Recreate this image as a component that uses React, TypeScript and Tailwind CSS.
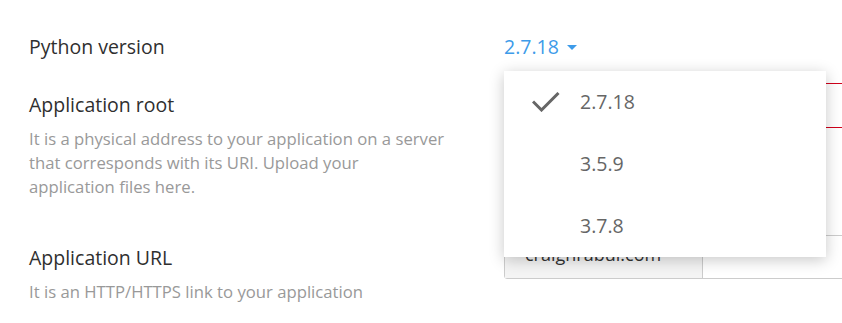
import { useState } from "react"

const versions = ["2.7.18", "3.5.9", "3.7.8"]

function CheckIcon() {
  return (
    <svg width="28" height="20" viewBox="0 0 28 20" fill="none">
      <path d="M1 9.5 L9.5 18 L26.5 1" stroke="#666" strokeWidth="3" strokeLinecap="butt" strokeLinejoin="miter" />
    </svg>
  )
}

export default function App() {
  const [selected, setSelected] = useState("2.7.18")
  const [open, setOpen] = useState(true)

  return (
    <div
      className="w-[842px] h-[323px] overflow-hidden bg-white text-[#333]"
      style={{ fontFamily: '"Open Sans", "Noto Sans", sans-serif' }}
    >
      <div className="grid grid-cols-[504px_1fr] pt-[34px]">
        {/* Python version */}
        <div className="pl-[29px] text-[19.5px] leading-[26px] text-[#2f2f2f]">Python version</div>
        <div className="relative">
          <button
            onClick={() => setOpen(!open)}
            className="flex items-center gap-[8px] text-[19.5px] leading-[26px] text-[#3d9be9]"
          >
            {selected}
            <span className="w-0 h-0 border-l-[5px] border-r-[5px] border-t-[5px] border-l-transparent border-r-transparent border-t-[#3d9be9] mt-[1px]" />
          </button>

          {open && (
            <div className="absolute left-0 top-[37px] z-20 w-[322px] bg-white shadow-[0_3px_14px_rgba(0,0,0,0.22)]">
              {versions.map((v) => (
                <div
                  key={v}
                  onClick={() => {
                    setSelected(v)
                    setOpen(false)
                  }}
                  className="flex h-[62px] items-center cursor-pointer"
                >
                  <div className="w-[76px] pl-[28px] flex items-center">
                    {v === selected && <CheckIcon />}
                  </div>
                  <span className="text-[19.5px] text-[#666]">{v}</span>
                </div>
              ))}
            </div>
          )}
        </div>

        {/* Application root */}
        <div className="mt-[23px] pl-[29px] pt-[9px]">
          <div className="text-[19.5px] leading-[26px] text-[#2f2f2f]">Application root</div>
          <p className="mt-[9px] w-[440px] text-[16.7px] leading-[24px] text-[#999]">
            It is a physical address to your application on a server that corresponds with its URI. Upload your
            <br />
            application files here.
          </p>
        </div>
        <div className="mt-[23px]">
          <div className="h-[45px] w-[400px] border border-[#d0021b] rounded-[3px] bg-white" />
        </div>

        {/* Application URL */}
        <div className="mt-[36px] pl-[29px] pt-[10px]">
          <div className="text-[19.5px] leading-[26px] text-[#2f2f2f]">Application URL</div>
          <p className="mt-[9px] text-[16.7px] leading-[24px] text-[#999]">It is an HTTP/HTTPS link to your application</p>
        </div>
        <div className="mt-[36px]">
          <div className="flex h-[44px] w-[400px] border border-[#ccc] rounded-[3px]">
            <div className="w-[198px] flex items-center pl-[20px] pb-[6px] bg-[#f4f4f4] border-r border-[#ccc] text-[18px] text-[#333]">
              craighrabul.com
            </div>
            <div className="flex-1 bg-white" />
          </div>
        </div>
      </div>
    </div>
  )
}
